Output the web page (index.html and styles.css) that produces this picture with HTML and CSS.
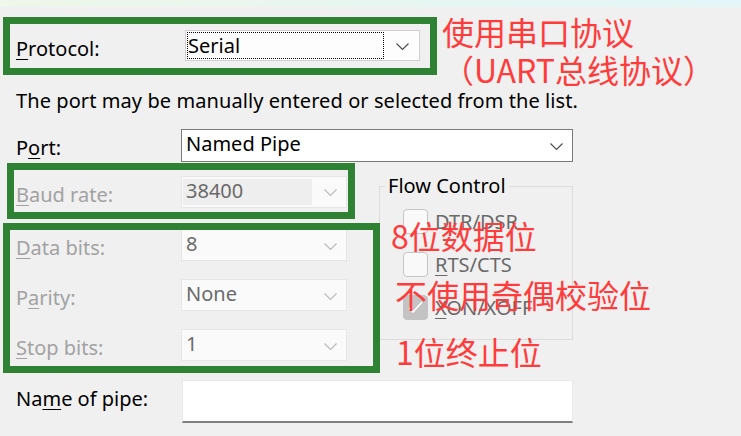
FILE: index.html
```html
<!DOCTYPE html>
<html lang="zh-CN">

<head>
    <meta charset="UTF-8">
    <meta name="viewport" content="width=device-width, initial-scale=1.0">
    <title>Serial settings</title>
    <link rel="stylesheet" href="styles.css">
</head>

<body>
    <!-- Franja superior de la ventana -->
    <div class="topbar"></div>

    <!-- Formulario de conexión -->
    <main class="dialog">
        <div class="row row-protocol">
            <label class="lbl"><u>P</u>rotocol:</label>
            <div class="combo combo-protocol">
                <span class="focus">Serial</span>
                <svg class="chev" width="13" height="7" viewBox="0 0 13 7"><path d="M0.5 0.5 L6.5 6.5 L12.5 0.5" /></svg>
            </div>
        </div>

        <p class="hint">The port may be manually entered or selected from the list.</p>

        <div class="row row-port">
            <label class="lbl">P<u>o</u>rt:</label>
            <div class="combo combo-wide">
                <span class="combo-text">Named Pipe</span>
                <svg class="chev" width="13" height="7" viewBox="0 0 13 7"><path d="M0.5 0.5 L6.5 6.5 L12.5 0.5" /></svg>
            </div>
        </div>

        <div class="serial">
            <div class="serial-fields">
                <div class="row row-baud">
                    <label class="lbl off"><u>B</u>aud rate:</label>
                    <div class="combo off">
                        <span class="combo-text sel">38400</span>
                        <svg class="chev" width="13" height="7" viewBox="0 0 13 7"><path d="M0.5 0.5 L6.5 6.5 L12.5 0.5" /></svg>
                    </div>
                </div>
                <div class="row row-data">
                    <label class="lbl off"><u>D</u>ata bits:</label>
                    <div class="combo off">
                        <span class="combo-text">8</span>
                        <svg class="chev" width="13" height="7" viewBox="0 0 13 7"><path d="M0.5 0.5 L6.5 6.5 L12.5 0.5" /></svg>
                    </div>
                </div>
                <div class="row row-parity">
                    <label class="lbl off">P<u>a</u>rity:</label>
                    <div class="combo off">
                        <span class="combo-text">None</span>
                        <svg class="chev" width="13" height="7" viewBox="0 0 13 7"><path d="M0.5 0.5 L6.5 6.5 L12.5 0.5" /></svg>
                    </div>
                </div>
                <div class="row row-stop">
                    <label class="lbl off"><u>S</u>top bits:</label>
                    <div class="combo off">
                        <span class="combo-text">1</span>
                        <svg class="chev" width="13" height="7" viewBox="0 0 13 7"><path d="M0.5 0.5 L6.5 6.5 L12.5 0.5" /></svg>
                    </div>
                </div>
            </div>

            <fieldset class="flow">
                <legend>Flow Control</legend>
                <div class="check">
                    <span class="box"></span>
                    <span class="check-text">DTR/DSR</span>
                </div>
                <div class="check">
                    <span class="box"></span>
                    <span class="check-text"><u>R</u>TS/CTS</span>
                </div>
                <div class="check">
                    <span class="box checked">
                        <svg width="23" height="23" viewBox="0 0 23 23"><path d="M5 12 L9 16 L18 6" /></svg>
                    </span>
                    <span class="check-text"><u>X</u>ON/XOFF</span>
                </div>
            </fieldset>
        </div>

        <div class="row row-pipe">
            <label class="lbl">Na<u>m</u>e of pipe:</label>
            <div class="textbox"></div>
        </div>
    </main>

    <!-- Anotaciones encima de la captura -->
    <div class="mark mark-protocol"></div>
    <div class="mark mark-baud"></div>
    <div class="mark mark-bits"></div>

    <div class="note note-protocol">使用串口协议<br>（UART总线协议）</div>
    <div class="note note-data">8位数据位</div>
    <div class="note note-parity">不使用奇偶校验位</div>
    <div class="note note-stop">1位终止位</div>
</body>

</html>
```

FILE: styles.css
```css
/* Estilos básicos del diálogo */
body {
    margin: 0;
    background-color: #f0f0f0;
    font-family: "Noto Sans", "Open Sans", sans-serif;
    font-size: 20px;
    line-height: 24px;
    color: #000;
    width: 741px;
    height: 436px;
    overflow: hidden;
    position: relative;
}

.topbar {
    height: 7px;
    background: linear-gradient(90deg, #eff6ea 0%, #e6f6f2 60%, #e4f6f8 100%);
}

.dialog {
    padding-left: 16px;
}

u {
    text-decoration-thickness: 1px;
    text-underline-offset: 3px;
}

.row {
    display: flex;
    align-items: flex-start;
}

.lbl {
    width: 165px;
    flex: none;
    padding-top: 7px;
}

.lbl.off {
    color: #a2a2a2;
}

.row-protocol {
    margin-top: 23px;
}

.hint {
    margin: 28px 0 0;
    letter-spacing: 0.08px;
}

.row-port {
    margin-top: 16px;
}

.row-baud {
    margin-top: 0;
}

.row-data {
    margin-top: 21px;
}

.row-parity,
.row-stop {
    margin-top: 18px;
}

.row-pipe {
    margin-top: 19px;
}

/* Listas desplegables */
.combo {
    box-sizing: border-box;
    display: flex;
    align-items: flex-start;
    width: 166px;
    height: 32px;
    padding: 2px 0 0 1px;
    background-color: #fff;
    border: 1px solid #7a7a7a;
}

.combo-protocol {
    width: 235px;
    height: 31px;
    margin-left: 4px;
    padding: 1px 0 0 1px;
    background-color: #fdfdfd;
    border-color: #d0d0d0;
}

.combo-wide {
    width: 392px;
    height: 33px;
}

.combo.off {
    background-color: #fafafa;
    border-color: #e6e6e6;
}

.combo-text {
    padding-left: 3px;
}

.combo.off .combo-text {
    color: #6a6a6a;
}

.combo-text.sel {
    width: 126px;
    height: 26px;
    background-color: #eeeeee;
}

.focus {
    box-sizing: border-box;
    width: 197px;
    height: 27px;
    border: 1px dotted #000;
    line-height: 23px;
    padding-top: 1px;
}

.chev {
    margin: 0 9px 0 auto;
    align-self: center;
    fill: none;
    stroke: #4a4a4a;
    stroke-width: 1.1;
}

.combo-protocol .chev {
    margin-right: 10px;
}

.combo.off .chev {
    stroke: #b8b8b8;
}

.combo-text.sel + .chev {
    margin-top: -1px;
}

/* Sección de parámetros serie */
.serial {
    display: flex;
    align-items: flex-start;
    margin-top: 14px;
}

.serial-fields {
    width: 331px;
    flex: none;
}

.flow {
    box-sizing: border-box;
    width: 194px;
    margin: -2px 0 0 32px;
    padding: 11px 0 19px 0;
    border: 1px solid #dcdcdc;
}

.flow legend {
    margin-left: 5px;
    padding: 0 3px;
}

.check {
    display: flex;
    align-items: center;
    height: 25px;
    gap: 7px;
    margin-left: 23px;
    color: #6a6a6a;
}

.check + .check {
    margin-top: 18px;
}

.box {
    box-sizing: border-box;
    width: 25px;
    height: 25px;
    flex: none;
    border: 1px solid #c6c6c6;
    border-radius: 4px;
    background-color: #f9f9f9;
}

.box.checked {
    background-color: #c3c3c3;
    border-color: #c3c3c3;
}

.box svg {
    display: block;
    fill: none;
    stroke: #fff;
    stroke-width: 1.6;
}

/* Caja de texto */
.textbox {
    box-sizing: border-box;
    width: 391px;
    height: 43px;
    margin-left: 1px;
    background-color: #fff;
    border: 1px solid #e8e8e8;
    border-bottom: 2px solid #808080;
}

/* Anotaciones: recuadros verdes y textos rojos */
.mark {
    position: absolute;
    box-sizing: border-box;
    border: 7px solid #2f8234;
}

.mark-protocol {
    left: 3px;
    top: 17px;
    width: 434px;
    height: 58px;
}

.mark-baud {
    left: 7px;
    top: 163px;
    width: 348px;
    height: 56px;
}

.mark-bits {
    left: 3px;
    top: 223px;
    width: 377px;
    height: 150px;
}

.note {
    position: absolute;
    font-family: "Noto Sans CJK SC", sans-serif;
    font-size: 32px;
    line-height: 38px;
    color: #ff3c3c;
    white-space: nowrap;
}

.note-protocol {
    left: 442px;
    top: 12px;
}

.note-data {
    left: 391px;
    top: 216px;
}

.note-parity {
    left: 395px;
    top: 275px;
}

.note-stop {
    left: 396px;
    top: 332px;
}
```
